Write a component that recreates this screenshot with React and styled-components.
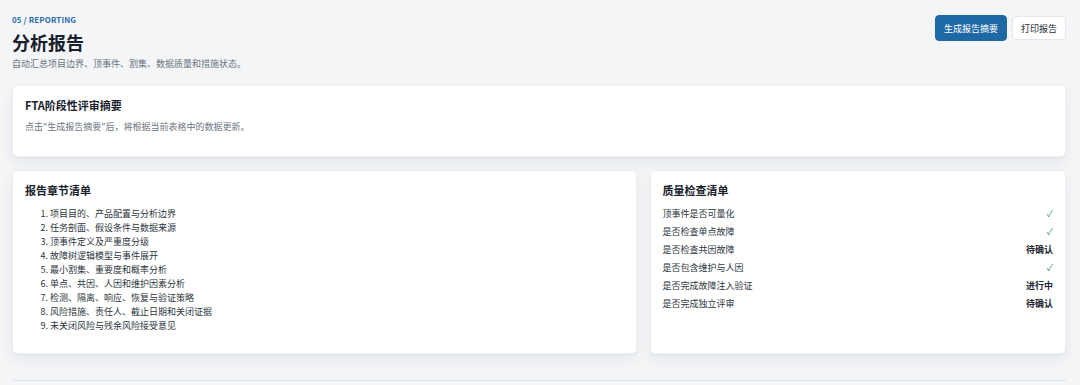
import React from "react";
import styled, { createGlobalStyle } from "styled-components";

const GlobalStyle = createGlobalStyle`
  html, body {
    margin: 0;
    padding: 0;
    background: #f3f5f7;
    font-family: "Noto Sans CJK SC", "Noto Sans", "Liberation Sans", sans-serif;
    color: #1d2630;
  }
  * { box-sizing: border-box; }
`;

const Page = styled.div`
  padding: 15px 14px 0 12px;
  width: 1080px;
`;

const Header = styled.header`
  display: flex;
  justify-content: space-between;
  align-items: flex-start;
`;

const Eyebrow = styled.div`
  font-size: 8px;
  line-height: 10px;
  font-weight: 700;
  color: #2d6eab;
  letter-spacing: 0.1px;
`;

const Title = styled.h1`
  margin: 5px 0 0;
  font-size: 18px;
  line-height: 24px;
  font-weight: 700;
  color: #18212b;
`;

const Subtitle = styled.p`
  margin: 4px 0 0;
  font-size: 9px;
  line-height: 12px;
  color: #6b7480;
`;

const Actions = styled.div`
  display: flex;
  align-items: center;
  gap: 5px;
`;

const Button = styled.button`
  font-family: inherit;
  font-size: 9px;
  height: ${(p) => (p.$primary ? "26px" : "24px")};
  padding: 0 8px;
  border-radius: 4px;
  cursor: pointer;
  border: 1px solid ${(p) => (p.$primary ? "#1f68a6" : "#e4e7eb")};
  background: ${(p) => (p.$primary ? "#1f68a6" : "#ffffff")};
  color: ${(p) => (p.$primary ? "#ffffff" : "#222b35")};
`;

const Card = styled.section`
  background: #ffffff;
  border-radius: 5px;
  border: 1px solid #edf0f2;
  box-shadow: 0 6px 14px rgba(20, 30, 45, 0.06), 0 1px 2px rgba(20, 30, 45, 0.04);
  padding: 12px 12px 20px;
`;

const SummaryCard = styled(Card)`
  margin-top: 15px;
  min-height: 72px;
`;

const CardTitle = styled.h2`
  margin: 0;
  font-size: 11px;
  line-height: 14px;
  font-weight: 700;
  color: #18212b;
`;

const Muted = styled.p`
  margin: 9px 0 0;
  font-size: 9px;
  line-height: 12px;
  color: #6b7480;
`;

const Grid = styled.div`
  display: grid;
  grid-template-columns: 1.5fr 1fr;
  gap: 13px;
  margin-top: 13px;
`;

const ChapterList = styled.ol`
  margin: 10px 0 0;
  padding-left: 25px;
  font-size: 9px;
  line-height: 14px;
  color: #2c3540;
`;

const CheckList = styled.ul`
  list-style: none;
  margin: 7px 0 0;
  padding: 0;
`;

const CheckRow = styled.li`
  display: flex;
  justify-content: space-between;
  align-items: center;
  height: 18px;
  font-size: 9px;
  color: #2c3540;
`;

const Status = styled.span`
  font-weight: ${(p) => (p.$ok ? 400 : 700)};
  color: ${(p) => (p.$ok ? "#4a9a78" : "#1d2630")};
  font-size: 9px;
`;

const Footer = styled.div`
  margin-top: 26px;
  border-top: 1px solid #e0e4e8;
  height: 4px;
`;

const chapters = [
  "项目目的、产品配置与分析边界",
  "任务剖面、假设条件与数据来源",
  "顶事件定义及严重度分级",
  "故障树逻辑模型与事件展开",
  "最小割集、重要度和概率分析",
  "单点、共因、人因和维护因素分析",
  "检测、隔离、响应、恢复与验证策略",
  "风险措施、责任人、截止日期和关闭证据",
  "未关闭风险与残余风险接受意见",
];

const checks = [
  { label: "顶事件是否可量化", status: "ok" },
  { label: "是否检查单点故障", status: "ok" },
  { label: "是否检查共因故障", status: "待确认" },
  { label: "是否包含维护与人因", status: "ok" },
  { label: "是否完成故障注入验证", status: "进行中" },
  { label: "是否完成独立评审", status: "待确认" },
];

export default function App() {
  return (
    <>
      <GlobalStyle />
      <Page>
        <Header>
          <div>
            <Eyebrow>05 / REPORTING</Eyebrow>
            <Title>分析报告</Title>
            <Subtitle>自动汇总项目边界、顶事件、割集、数据质量和措施状态。</Subtitle>
          </div>
          <Actions>
            <Button $primary>生成报告摘要</Button>
            <Button>打印报告</Button>
          </Actions>
        </Header>

        <SummaryCard>
          <CardTitle>FTA阶段性评审摘要</CardTitle>
          <Muted>点击"生成报告摘要"后，将根据当前表格中的数据更新。</Muted>
        </SummaryCard>

        <Grid>
          <Card>
            <CardTitle>报告章节清单</CardTitle>
            <ChapterList>
              {chapters.map((c) => (
                <li key={c}>{c}</li>
              ))}
            </ChapterList>
          </Card>
          <Card>
            <CardTitle>质量检查清单</CardTitle>
            <CheckList>
              {checks.map((c) => (
                <CheckRow key={c.label}>
                  <span>{c.label}</span>
                  {c.status === "ok" ? (
                    <Status $ok>✓</Status>
                  ) : (
                    <Status>{c.status}</Status>
                  )}
                </CheckRow>
              ))}
            </CheckList>
          </Card>
        </Grid>
        <Footer />
      </Page>
    </>
  );
}
